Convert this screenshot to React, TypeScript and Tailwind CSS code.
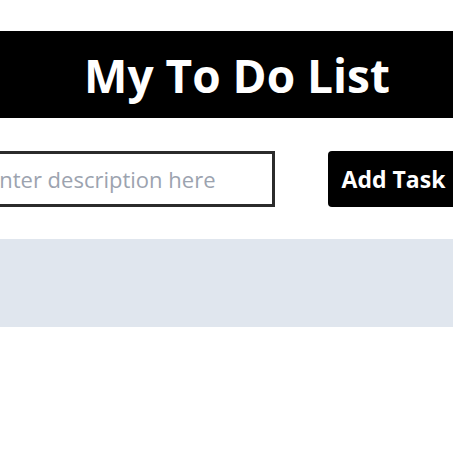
export default function App() {
  return (
    <div className="w-[453px] h-[453px] overflow-hidden bg-white" style={{ fontFamily: '"Open Sans", "Noto Sans", sans-serif' }}>
      {/* Header */}
      <header className="mt-[31px] h-[87px] bg-black flex items-center justify-center pl-[21px]">
        <h1 className="text-[46px] font-bold text-white leading-none">My To Do List</h1>
      </header>

      {/* Add task row */}
      <div className="mt-[33px] flex justify-center gap-[53px] pr-[16px]">
        <input
          type="text"
          placeholder="Enter description here"
          className="shrink-0 w-[297px] h-[56px] border-[3px] border-[#2b2b2b] pl-[6px] text-[22px] text-gray-800 placeholder:text-[#9ca3af] outline-none"
        />
        <button className="shrink-0 h-[56px] w-[131px] rounded-[4px] bg-black text-white text-[23px] font-bold">
          Add Task
        </button>
      </div>

      {/* Task list */}
      <div className="mt-[32px] h-[88px] bg-[#e0e6ee]"></div>
    </div>
  )
}
